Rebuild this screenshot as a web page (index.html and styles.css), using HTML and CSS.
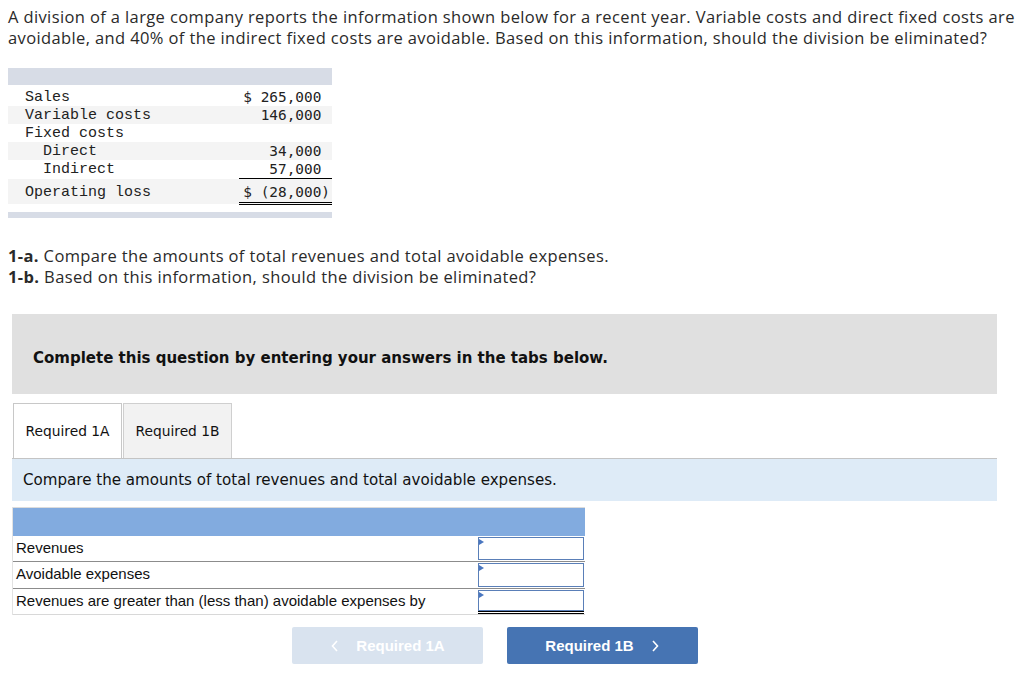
FILE: index.html
```html
<!DOCTYPE html>
<html>
<head>
<meta charset="utf-8">
<link rel="stylesheet" href="styles.css">
</head>
<body>
<div class="page">
  <p class="intro">A division of a large company reports the information shown below for a recent year. Variable costs and direct fixed costs are<br>avoidable, and 40% of the indirect fixed costs are avoidable. Based on this information, should the division be eliminated?</p>

  <div class="fin">
    <div class="fin-bar"></div>
    <table class="fin-table">
      <tr><td class="lbl">Sales</td><td class="amt">$ 265,000&nbsp;</td></tr>
      <tr class="alt"><td class="lbl">Variable costs</td><td class="amt">146,000&nbsp;</td></tr>
      <tr><td class="lbl">Fixed costs</td><td class="amt"></td></tr>
      <tr class="alt"><td class="lbl ind">Direct</td><td class="amt">34,000&nbsp;</td></tr>
      <tr><td class="lbl ind">Indirect</td><td class="amt under">57,000&nbsp;</td></tr>
      <tr class="alt total"><td class="lbl">Operating loss</td><td class="amt dbl">$ (28,000)</td></tr>
    </table>
    <div class="fin-bar thin"></div>
  </div>

  <div class="reqs">
    <p><b>1-a.</b> Compare the amounts of total revenues and total avoidable expenses.</p>
    <p><b>1-b.</b> Based on this information, should the division be eliminated?</p>
  </div>

  <div class="notice">Complete this question by entering your answers in the tabs below.</div>

  <div class="tabs">
    <div class="tab active">Required 1A</div>
    <div class="tab">Required 1B</div>
  </div>
  <div class="instr">Compare the amounts of total revenues and total avoidable expenses.</div>

  <div class="answer">
    <div class="ans-head"></div>
    <div class="ans-row">
      <div class="ans-lbl">Revenues</div>
      <div class="ans-cell"><div class="inp"><span class="tri"></span></div></div>
    </div>
    <div class="ans-row mid">
      <div class="ans-lbl">Avoidable expenses</div>
      <div class="ans-cell"><div class="inp"><span class="tri"></span></div></div>
    </div>
    <div class="ans-row last">
      <div class="ans-lbl">Revenues are greater than (less than) avoidable expenses by</div>
      <div class="ans-cell dbl-cell"><div class="inp"><span class="tri"></span></div></div>
    </div>
  </div>

  <div class="nav">
    <div class="btn prev">
      <svg width="10" height="14" viewBox="0 0 10 14"><path d="M7 2 L2.5 7 L7 12" fill="none" stroke="#ffffff" stroke-width="1.6"/></svg>
      <span>Required 1A</span>
    </div>
    <div class="btn next">
      <span>Required 1B</span>
      <svg width="10" height="14" viewBox="0 0 10 14"><path d="M3 2 L7.5 7 L3 12" fill="none" stroke="#ffffff" stroke-width="1.6"/></svg>
    </div>
  </div>
</div>
</body>
</html>
```

FILE: styles.css
```css
html, body {
  margin: 0;
  padding: 0;
  background: #ffffff;
}
.page {
  padding: 6px 0 0 8px;
  font-family: "Open Sans", "Liberation Sans", Arial, sans-serif;
  color: #2a2a2a;
}
.intro {
  margin: 0;
  font-size: 16.5px;
  line-height: 21px;
  letter-spacing: 0.38px;
  white-space: nowrap;
}
.fin {
  margin-top: 20px;
  width: 324px;
}
.fin-bar {
  height: 17px;
  background: #d7dce6;
}
.fin-bar.thin {
  height: 6px;
  margin-top: 7px;
}
.fin-table {
  width: 324px;
  border-collapse: collapse;
  margin-top: 3px;
}
.fin-table td {
  padding: 1px 0 0 0;
  height: 17px;
  line-height: 17px;
}
.fin-table tr.alt td {
  background: #f4f4f4;
}
.lbl {
  font-family: "Liberation Mono", "Courier New", monospace;
  font-size: 15px;
  padding-left: 17px !important;
  color: #222;
}
.lbl.ind {
  padding-left: 35px !important;
}
.amt {
  font-family: "DejaVu Sans Mono", monospace;
  font-size: 14.4px;
  text-align: right;
  width: 91px;
  padding-right: 2px !important;
  color: #222;
  white-space: pre;
}
.amt.under {
  border-bottom: 1px solid #000;
}
.fin-table tr.total td {
  height: 20px;
  line-height: 20px;
  padding-top: 3px;
}
.amt.dbl {
  border-bottom: 3px double #000;
}
.reqs {
  margin-top: 27px;
}
.reqs p {
  margin: 0;
  font-size: 16.5px;
  line-height: 21px;
  letter-spacing: 0.38px;
}
.notice {
  margin: 27px 0 0 4px;
  width: 985px;
  height: 80px;
  box-sizing: border-box;
  background: #e0e0e0;
  padding: 34px 0 0 21px;
  font-family: "DejaVu Sans", sans-serif;
  font-weight: bold;
  font-size: 15px;
  line-height: 20px;
  color: #111;
}
.tabs {
  display: flex;
  margin: 9px 0 0 5px;
}
.tab {
  width: 109px;
  height: 55px;
  box-sizing: border-box;
  border: 1px solid #cfcfcf;
  border-bottom: none;
  background: #f2f2f2;
  font-family: "DejaVu Sans", sans-serif;
  font-size: 13.8px;
  line-height: 54px;
  text-align: center;
  color: #111;
}
.tab.active {
  background: #ffffff;
  border-color: #c8c8c8;
  position: relative;
  z-index: 1;
}
.tab + .tab {
  margin-left: 1px;
}
.instr {
  margin-left: 4px;
  width: 985px;
  height: 43px;
  box-sizing: border-box;
  border-top: 1px solid #c4c4c4;
  background: #deebf7;
  padding-left: 11px;
  font-family: "DejaVu Sans", sans-serif;
  font-size: 15.1px;
  line-height: 42px;
  color: #111;
}
.answer {
  margin: 6px 0 0 4px;
  width: 573px;
  border-left: 1px solid #e2e2e2;
  box-sizing: border-box;
  font-family: "Liberation Sans", Arial, sans-serif;
}
.ans-head {
  height: 29px;
  box-sizing: border-box;
  border-top: 1px solid #dcdcdc;
  background: #82abdf;
}
.ans-row {
  display: flex;
  height: 25px;
  border-bottom: 1px solid #8c8c8c;
}
.ans-row.mid {
  height: 26px;
}
.ans-row.last {
  height: 25px;
  border-bottom: 1px solid #d8d8d8;
}
.ans-lbl {
  flex: 1;
  padding-left: 3px;
  font-size: 15px;
  line-height: 24px;
  color: #111;
}
.ans-cell {
  width: 107px;
  padding: 1px 1px 1px 0;
  box-sizing: border-box;
  background: #fff;
  position: relative;
}
.inp {
  height: 100%;
  box-sizing: border-box;
  border: 1px solid #5a7fb8;
  position: relative;
  background: #fff;
}
.dbl-cell {
  padding-bottom: 0;
}
.dbl-cell .inp {
  height: 21px;
  border-bottom: 1px solid #5a7fb8;
}
.dbl-cell::after {
  content: "";
  display: block;
  height: 3px;
  border-top: 1px solid #000;
  border-bottom: 1px solid #000;
  box-sizing: border-box;
}
.tri {
  position: absolute;
  left: 0;
  top: 1px;
  width: 0;
  height: 0;
  border-top: 3px solid transparent;
  border-bottom: 3px solid transparent;
  border-left: 5px solid #4a77c0;
}
.nav {
  display: flex;
  gap: 24px;
  margin: 12px 0 0 284px;
}
.btn {
  width: 191px;
  height: 37px;
  border-radius: 2px;
  display: flex;
  align-items: center;
  justify-content: center;
  gap: 16px;
  font-family: "Liberation Sans", Arial, sans-serif;
  font-weight: bold;
  font-size: 15px;
  color: #ffffff;
}
.btn.prev {
  background: #d9e3ef;
}
.btn.next {
  background: #4674b3;
}
```
